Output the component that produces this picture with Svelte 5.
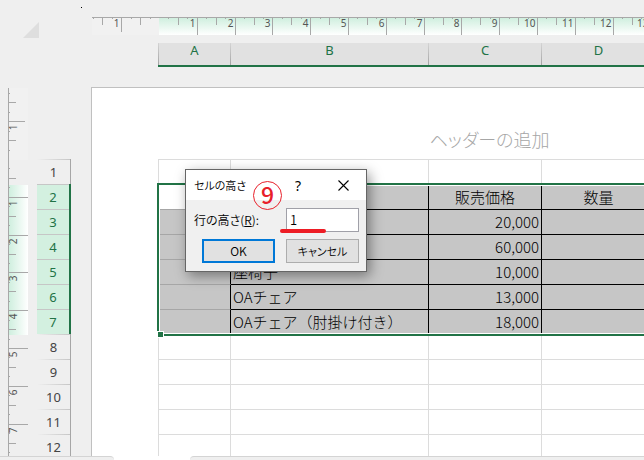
<script lang="ts">
	const CM = 37.8;

	const columns = [
		{ name: 'A', width: 72 },
		{ name: 'B', width: 198 },
		{ name: 'C', width: 113 },
		{ name: 'D', width: 114 },
		{ name: 'E', width: 165 }
	];

	const data: Record<number, string[]> = {
		2: ['', '', '販売価格', '数量', ''],
		3: ['', '', '20,000', '', ''],
		4: ['', '', '60,000', '', ''],
		5: ['', '座椅子', '10,000', '', ''],
		6: ['', 'OAチェア', '13,000', '', ''],
		7: ['', 'OAチェア（肘掛け付き）', '18,000', '', '']
	};

	const rows = Array.from({ length: 16 }, (_, i) => i + 1);
	const isSelected = (row: number) => row >= 2 && row <= 7;

	// quarter-centimetre steps counted from the ruler's zero point
	function ticks(zero: number, count: number) {
		return Array.from({ length: count }, (_, i) => i - 7)
			.filter((q) => q !== 0)
			.map((q) => ({
				pos: Math.round(zero + (q * CM) / 4) + 0.5,
				major: q % 4 === 0,
				half: q % 2 === 0,
				margin: q < 0,
				label: Math.abs(q / 4)
			}));
	}

	const hTicks = ticks(68, 60);
	const vTicks = ticks(73, 40);

	let height = $state('1');
</script>

<div class="app">
	<div class="top">
		<svg class="corner" width="91" height="87" aria-hidden="true">
			<rect x="81" y="7" width="1" height="1" fill="#000" />
			<path d="M39 22V38H23Z" fill="#dedede" />
		</svg>
		<div class="top-right">
			<svg class="h-ruler" height="18" aria-hidden="true">
				<defs>
					<linearGradient id="h-fade" x1="0" y1="0" x2="0" y2="1">
						<stop offset="0" stop-color="#cdeedd" />
						<stop offset="1" stop-color="#fff" />
					</linearGradient>
				</defs>
				<rect x="1" width="67" height="18" fill="#f1f1f1" />
				<rect x="68" width="100%" height="18" fill="url(#h-fade)" />
				<path d="M1 .5H3000" stroke="#a8a8a8" />
				{#each hTicks as t}
					<path
						d="M{t.pos} 1V{t.major ? (t.margin ? 15 : 18) : t.half ? 8 : 2}"
						stroke="#a8a8a8"
					/>
					{#if t.major}
						<text x={t.pos - 2} y="10" text-anchor="end">{t.label}</text>
					{/if}
				{/each}
			</svg>
			<div class="col-heads">
				{#each columns as col}
					<div class="col-head" style="width: {col.width}px">{col.name}</div>
				{/each}
			</div>
		</div>
	</div>

	<div class="body">
		<svg class="v-ruler" width="20" aria-hidden="true">
			<defs>
				<linearGradient id="v-fade">
					<stop offset="0" stop-color="#cdeedd" />
					<stop offset="1" stop-color="#fff" />
				</linearGradient>
			</defs>
			<rect y="1" width="20" height="72" fill="#f1f1f1" />
			<rect y="98" width="20" height="150" fill="url(#v-fade)" />
			<path d="M.5 1V3000" stroke="#a8a8a8" />
			{#each vTicks as t}
				<path
					d="M1 {t.pos - 1}H{t.major ? (t.margin ? 17 : 20) : t.half ? 8 : 2}"
					stroke="#a8a8a8"
				/>
				{#if t.major}
					<text transform="translate(9 {t.pos + 2}) rotate(-90)" text-anchor="end">{t.label}</text>
				{/if}
			{/each}
		</svg>

		<div class="row-heads">
			{#each rows as row}
				<div class="row-head" class:selected={isSelected(row)}>{row}</div>
			{/each}
		</div>

		<main class="page">
			<div class="sheet">
				<div class="page-header">ヘッダーの追加</div>
				<table>
					<colgroup>
						{#each columns as col}
							<col style="width: {col.width}px" />
						{/each}
					</colgroup>
					<tbody>
						{#each rows as row}
							<tr class:selected={isSelected(row)} class:heading={row === 2}>
								{#each columns as _, c}
									<td>{data[row]?.[c] ?? ''}</td>
								{/each}
							</tr>
						{/each}
					</tbody>
				</table>
				<div class="selection"><span class="handle"></span></div>
			</div>
		</main>
	</div>

	<footer>
		<div class="tab left"></div>
		<div class="tab right"></div>
	</footer>

	<div class="dialog" role="dialog" aria-labelledby="dialog-title">
		<div class="title-bar">
			<span id="dialog-title">セルの高さ</span>
			<button class="icon help" aria-label="ヘルプ">?</button>
			<button class="icon" aria-label="閉じる">
				<svg width="11" height="11" viewBox="0 0 11 11">
					<path d="M.5 .5L10.5 10.5M10.5 .5L.5 10.5" stroke="#000" stroke-width="1.1" />
				</svg>
			</button>
		</div>
		<form onsubmit={(e) => e.preventDefault()}>
			<label for="row-height">行の高さ(<u>R</u>):</label>
			<input id="row-height" type="text" bind:value={height} />
			<button class="push primary" type="submit">OK</button>
			<button class="push cancel" type="button">キャンセル</button>
		</form>
		<span class="step">9</span>
		<span class="underline"></span>
	</div>
</div>

<style>
	:global(body) {
		margin: 0;
		background: #efefef;
	}

	.app {
		position: relative;
		display: flex;
		flex-direction: column;
		height: 100vh;
		overflow: hidden;
		background: #efefef;
		font-family: 'Noto Sans', 'Noto Sans CJK JP', sans-serif;
	}

	.top {
		display: flex;
		flex: none;
	}

	.corner {
		display: block;
		flex: none;
	}

	.top-right {
		flex: 1;
		min-width: 0;
		padding-top: 17px;
		overflow: hidden;
	}

	.h-ruler {
		display: block;
		width: 100%;
	}

	.h-ruler text,
	.v-ruler text {
		font-size: 10px;
		fill: #555;
	}

	.col-heads {
		display: flex;
		margin: 8px 0 0 67px;
	}

	.col-head {
		flex: none;
		box-sizing: border-box;
		height: 24px;
		padding-left: 1px;
		border-bottom: 2px solid #217346;
		background: linear-gradient(#d4d4d4, #a4a4a4) left / 1px 100% no-repeat #e1e1e1;
		color: #217346;
		font-size: 13px;
		line-height: 14px;
		text-align: center;
	}

	.body {
		display: flex;
		flex: 1;
		min-height: 0;
		overflow: hidden;
	}

	.v-ruler {
		flex: none;
		height: 100%;
		margin-left: 8px;
	}

	.row-heads {
		flex: none;
		width: 34px;
		margin: 72px 20px 0 9px;
	}

	.row-head {
		box-sizing: border-box;
		height: 25px;
		border-right: 1px solid #a6a6a6;
		background: linear-gradient(to right, #efefef, #c6c6c6) top / 100% 1px no-repeat;
		color: #444;
		font-size: 13px;
		line-height: 26px;
		text-align: center;
	}

	.row-head.selected {
		border-right: 2px solid #217346;
		background: linear-gradient(#c6c6c6, #c6c6c6) top / 100% 1px no-repeat #d3f0e0;
		color: #217346;
	}

	.page {
		flex: 1;
		min-width: 0;
		overflow: hidden;
		border-top: 1px solid #c0c0c0;
		border-left: 1px solid #c0c0c0;
		background: #fff;
	}

	.sheet {
		position: relative;
		width: 663px;
		margin-left: 66px;
	}

	.page-header {
		height: 71px;
		color: #a6a6a6;
		font-family: 'Noto Sans CJK JP', sans-serif;
		font-size: 18px;
		font-weight: 300;
		font-feature-settings: 'palt';
		line-height: 102px;
		text-align: center;
	}

	table {
		width: 662px;
		table-layout: fixed;
		border-collapse: separate;
		border-spacing: 0;
		border-top: 1px solid #dcdcdc;
		border-left: 1px solid #dcdcdc;
		font-family: 'Noto Sans CJK JP', sans-serif;
		font-size: 15px;
		font-weight: 300;
		color: #000;
	}

	td {
		box-sizing: border-box;
		height: 25px;
		padding: 0 2px;
		border-right: 1px solid #dcdcdc;
		border-bottom: 1px solid #dcdcdc;
		line-height: 22px;
		white-space: nowrap;
	}

	.selected td {
		border-color: #000;
		background: #c6c6c6;
	}

	.selected td:first-child {
		border-bottom-color: #a6a6a6;
	}

	.selected td:nth-child(3) {
		text-align: right;
	}

	.selected.heading td {
		text-align: center;
	}

	.heading td:first-child {
		background: #fff;
	}

	.selection {
		position: absolute;
		top: 95px;
		right: 0;
		left: -1px;
		height: 149px;
		border: 2px solid #217346;
		box-shadow: inset 0 0 0 1px #fff;
	}

	.handle {
		position: absolute;
		bottom: -4px;
		left: -2px;
		width: 5px;
		height: 5px;
		border: 1px solid #fff;
		background: #217346;
	}

	footer {
		display: flex;
		flex: none;
		gap: 76px;
		height: 4px;
		background: #fff;
	}

	.tab {
		box-sizing: border-box;
		border-top: 1px solid #d4d4d4;
		background: #efefef;
	}

	.tab.left {
		width: 114px;
		border-top-right-radius: 4px;
	}

	.tab.right {
		flex: 1;
		border-top-left-radius: 4px;
	}

	.dialog {
		position: absolute;
		top: 169px;
		left: 185px;
		box-sizing: border-box;
		width: 182px;
		border: 1px solid #666;
		background: #f0f0f0;
		box-shadow: 3px 4px 12px rgba(0, 0, 0, 0.4);
		color: #000;
		font-family: 'Noto Sans CJK JP', sans-serif;
		font-size: 12px;
		font-weight: 350;
		font-feature-settings: 'palt';
	}

	.title-bar {
		display: flex;
		align-items: center;
		height: 30px;
		padding-left: 8px;
		background: #fff;
		font-size: 11px;
	}

	.title-bar span {
		flex: 1;
	}

	button,
	input {
		box-sizing: border-box;
		margin: 0;
		color: inherit;
		font: inherit;
		font-feature-settings: inherit;
	}

	.icon {
		display: flex;
		align-items: center;
		justify-content: center;
		width: 46px;
		height: 30px;
		padding: 0;
		border: 0;
		background: none;
	}

	.icon.help {
		width: 44px;
		font-family: 'Noto Sans', sans-serif;
		font-size: 14px;
		font-weight: 400;
	}

	form {
		display: grid;
		grid-template-columns: 73px 73px;
		gap: 7px 11px;
		padding: 8px 7px 8px 16px;
	}

	label {
		margin-left: -8px;
		line-height: 24px;
		white-space: nowrap;
	}

	input {
		width: 100%;
		height: 24px;
		padding: 0 3px 2px;
		border: 1px solid #a0a0a8;
		background: #fff;
		font-size: 13px;
		outline: 0;
	}

	.push {
		height: 24px;
		padding: 0;
		border: 1px solid #adadad;
		background: #e1e1e1;
		line-height: 20px;
	}

	.push.primary {
		border: 2px solid #0078d7;
	}

	.push.cancel {
		font-size: 11px;
	}

	.step {
		position: absolute;
		top: 11px;
		left: 67px;
		box-sizing: border-box;
		width: 29px;
		height: 29px;
		border: 1px solid #e8202a;
		border-radius: 50%;
		color: #e8202a;
		font-size: 23px;
		font-weight: 500;
		line-height: 24px;
		text-align: center;
	}

	.underline {
		position: absolute;
		top: 59px;
		left: 94px;
		width: 46px;
		height: 4px;
		border-radius: 2px;
		background: #ed1c24;
	}
</style>
